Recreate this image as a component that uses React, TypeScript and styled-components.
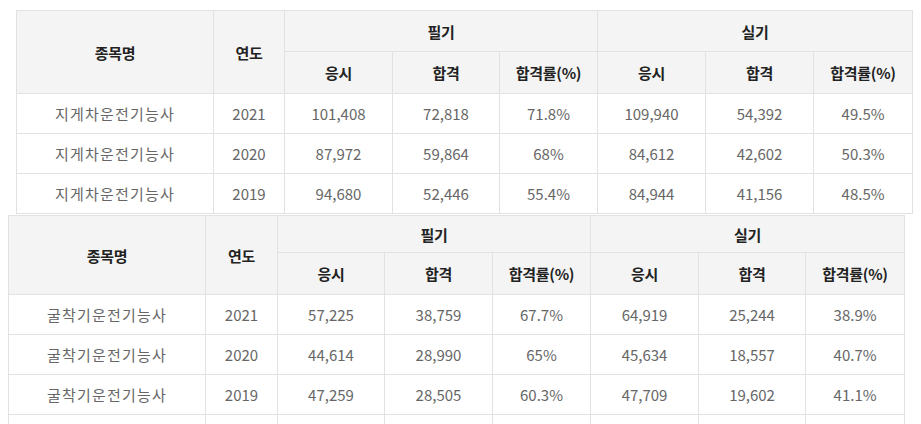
import React from "react";
import styled, { createGlobalStyle } from "styled-components";

const Global = createGlobalStyle`
  html, body { margin: 0; padding: 0; background: #fff; }
  body { font-family: "Noto Sans CJK KR", "Noto Sans", sans-serif; }
`;

const Page = styled.div`
  padding-top: 10px;
  display: flex;
  flex-direction: column;
`;

const Table = styled.table<{ $left: number; $top: number }>`
  border-collapse: collapse;
  table-layout: fixed;
  width: 897px;
  margin-left: ${(p) => p.$left}px;
  margin-top: ${(p) => p.$top}px;
  font-size: 15px;
  text-align: center;
`;

const Th = styled.th<{ $h?: number }>`
  background: #f4f4f4;
  border: 1px solid #e2e2e2;
  color: #222;
  font-weight: 700;
  padding: 0;
  height: ${(p) => (p.$h ? `${p.$h}px` : "auto")};
  letter-spacing: -0.3px;
`;

const Td = styled.td<{ $wide?: boolean }>`
  border: 1px solid #e2e2e2;
  color: #666;
  font-weight: 400;
  padding: 0;
  height: 39px;
  letter-spacing: ${(p) => (p.$wide ? "1.2px" : "0")};
`;

type Row = [string, string, string, string, string, string, string, string];

interface Props {
  left: number;
  top: number;
  widths: number[];
  h1: number;
  rows: Row[];
  extraRow?: boolean;
}

function ResultTable({ left, top, widths, h1, rows, extraRow }: Props) {
  return (
    <Table $left={left} $top={top}>
      <colgroup>
        {widths.map((w, i) => (
          <col key={i} style={{ width: w }} />
        ))}
      </colgroup>
      <thead>
        <tr>
          <Th rowSpan={2}>종목명</Th>
          <Th rowSpan={2}>연도</Th>
          <Th colSpan={3} $h={h1}>필기</Th>
          <Th colSpan={3}>실기</Th>
        </tr>
        <tr>
          <Th $h={41}>응시</Th>
          <Th>합격</Th>
          <Th>합격률(%)</Th>
          <Th>응시</Th>
          <Th>합격</Th>
          <Th>합격률(%)</Th>
        </tr>
      </thead>
      <tbody>
        {rows.map((r, i) => (
          <tr key={i}>
            {r.map((c, j) => (
              <Td key={j} $wide={j === 0}>
                {c}
              </Td>
            ))}
          </tr>
        ))}
        {extraRow && (
          <tr>
            {widths.map((_, j) => (
              <Td key={j} />
            ))}
          </tr>
        )}
      </tbody>
    </Table>
  );
}

const rows1: Row[] = [
  ["지게차운전기능사", "2021", "101,408", "72,818", "71.8%", "109,940", "54,392", "49.5%"],
  ["지게차운전기능사", "2020", "87,972", "59,864", "68%", "84,612", "42,602", "50.3%"],
  ["지게차운전기능사", "2019", "94,680", "52,446", "55.4%", "84,944", "41,156", "48.5%"],
];

const rows2: Row[] = [
  ["굴착기운전기능사", "2021", "57,225", "38,759", "67.7%", "64,919", "25,244", "38.9%"],
  ["굴착기운전기능사", "2020", "44,614", "28,990", "65%", "45,634", "18,557", "40.7%"],
  ["굴착기운전기능사", "2019", "47,259", "28,505", "60.3%", "47,709", "19,602", "41.1%"],
];

export default function App() {
  return (
    <>
      <Global />
      <Page>
        <ResultTable
          left={16}
          top={0}
          widths={[197, 71, 108, 107, 98, 108, 108, 99]}
          h1={40}
          rows={rows1}
        />
        <ResultTable
          left={8}
          top={1}
          widths={[197, 72, 107, 108, 98, 108, 107, 99]}
          h1={36}
          rows={rows2}
          extraRow
        />
      </Page>
    </>
  );
}
